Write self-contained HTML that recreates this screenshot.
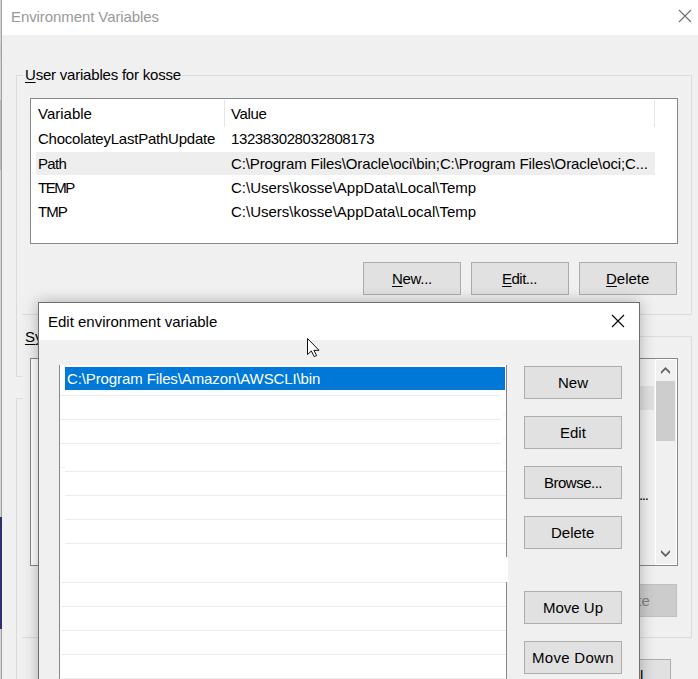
<!DOCTYPE html>
<html><head><meta charset="utf-8">
<style>
*{margin:0;padding:0;box-sizing:border-box}
html,body{width:698px;height:679px;overflow:hidden;background:#f0f0f0}
body{position:relative;font-family:"Liberation Sans",sans-serif;font-size:15px;color:#000}
.a{position:absolute}
.t{position:absolute;white-space:pre;line-height:13px;font-size:15px}
.hl{position:absolute;height:1px}
.vl{position:absolute;width:1px}
.btn{position:absolute;background:#e1e1e1;border:1px solid #adadad}
.u{text-decoration:underline;text-underline-offset:2px}
</style></head><body>
<!-- background window -->
<div class="a" style="left:0;top:0;width:1px;height:679px;background:#d4d4d4"></div>
<div class="a" style="left:0;top:45px;width:1px;height:13px;background:#c5cfdc"></div>
<div class="a" style="left:0;top:100px;width:1px;height:70px;background:#b8b8b8"></div>
<div class="a" style="left:1px;top:0;width:1px;height:679px;background:#a0a0a0"></div>
<div class="a" style="left:2px;top:0;width:696px;height:35px;background:#fff"></div>
<div class="t" style="left:11px;top:10px;color:#999;letter-spacing:-0.085px">Environment Variables</div>
<svg class="a" style="left:678px;top:9px" width="14" height="14" viewBox="0 0 14 14"><path d="M1 1L13 13M13 1L1 13" stroke="#6f6f6f" stroke-width="1.1" fill="none"/></svg>

<div class="a" style="left:0;top:517px;width:2px;height:112px;background:#2b3170"></div>
<!-- upper groupbox -->
<div class="hl" style="left:16px;top:75px;width:676px;background:#dcdcdc"></div>
<div class="vl" style="left:16px;top:75px;height:302px;background:#dcdcdc"></div>
<div class="vl" style="left:691px;top:75px;height:240px;background:#dcdcdc"></div>
<div class="hl" style="left:22px;top:314px;width:670px;background:#dcdcdc"></div>
<div class="a" style="left:23px;top:66px;width:159px;height:20px;background:#f0f0f0"></div>
<div class="t" style="left:25px;top:68px;letter-spacing:-0.21px"><span class="u">U</span>ser variables for kosse</div>

<!-- listview -->
<div class="a" style="left:30px;top:98px;width:648px;height:146px;background:#fff;border:1px solid #828790"></div>
<div class="vl" style="left:224px;top:100px;height:27px;background:#e5e5e5"></div>
<div class="vl" style="left:654px;top:100px;height:27px;background:#e5e5e5"></div>
<div class="t" style="left:38px;top:107px">Variable</div>
<div class="t" style="left:231px;top:107px;letter-spacing:-0.37px">Value</div>
<div class="a" style="left:36px;top:152px;width:619px;height:23px;background:#eeeeee"></div>
<div class="t" style="left:38px;top:132px;letter-spacing:-0.23px">ChocolateyLastPathUpdate</div>
<div class="t" style="left:231px;top:132px;letter-spacing:-0.39px">132383028032808173</div>
<div class="t" style="left:38px;top:157px;letter-spacing:-0.63px">Path</div>
<div class="t" style="left:231px;top:157px;letter-spacing:-0.115px">C:\Program Files\Oracle\oci\bin;C:\Program Files\Oracle\oci;C...</div>
<div class="t" style="left:38px;top:181px;letter-spacing:-1.5px">TEMP</div>
<div class="t" style="left:231px;top:181px">C:\Users\kosse\AppData\Local\Temp</div>
<div class="t" style="left:38px;top:205px;letter-spacing:-1px">TMP</div>
<div class="t" style="left:231px;top:205px">C:\Users\kosse\AppData\Local\Temp</div>

<!-- buttons -->
<div class="btn" style="left:363px;top:262px;width:98px;height:33px"></div>
<div class="t" style="left:392px;top:272px;letter-spacing:-0.28px"><span class="u">N</span>ew...</div>
<div class="btn" style="left:471px;top:262px;width:98px;height:33px"></div>
<div class="t" style="left:502px;top:272px;letter-spacing:-0.5px"><span class="u">E</span>dit...</div>
<div class="btn" style="left:579px;top:262px;width:98px;height:33px"></div>
<div class="t" style="left:606px;top:272px"><span class="u">D</span>elete</div>

<!-- lower groupbox -->
<div class="hl" style="left:639px;top:336px;width:53px;background:#dcdcdc"></div>
<div class="hl" style="left:16px;top:376px;width:6px;background:#dcdcdc"></div>
<div class="hl" style="left:16px;top:398px;width:6px;background:#dcdcdc"></div>
<div class="vl" style="left:16px;top:398px;height:281px;background:#dcdcdc"></div>
<div class="vl" style="left:691px;top:336px;height:302px;background:#dcdcdc"></div>
<div class="hl" style="left:22px;top:637px;width:670px;background:#dcdcdc"></div>
<div class="t" style="left:25px;top:330px"><span class="u">S</span>ystem</div>

<!-- system listview -->
<div class="a" style="left:30px;top:358px;width:648px;height:208px;background:#fff;border:1px solid #828790"></div>
<div class="a" style="left:656px;top:360px;width:20px;height:204px;background:#f0f0f0"></div>

<div class="a" style="left:639px;top:359px;width:16px;height:206px;background:#f1f1f1"></div>
<div class="a" style="left:639px;top:386px;width:15px;height:24px;background:#e0e0e0"></div>
<div class="vl" style="left:655px;top:359px;height:206px;background:#fff"></div>
<svg class="a" style="left:655px;top:358px" width="20" height="20"><path d="M6 13.5L10.5 9L15 13.5L15 16L10.5 11.5L6 16Z" fill="#606060"/></svg>
<div class="a" style="left:656px;top:381px;width:19px;height:60px;background:#cdcdcd"></div>
<svg class="a" style="left:655px;top:540px" width="20" height="20"><path d="M6 10L10.5 14.5L15 10L15 12.5L10.5 17L6 12.5Z" fill="#606060"/></svg>
<div class="t" style="left:639px;top:488px;letter-spacing:-1.3px">...</div>

<div class="btn" style="left:600px;top:584px;width:77px;height:33px;background:#cccccc;border-color:#bfbfbf"></div>
<div class="t" style="left:629px;top:594px;color:#838383">ete</div>
<div class="btn" style="left:600px;top:659px;width:71px;height:33px"></div>
<div class="t" style="left:640px;top:669px">l</div>

<!-- dialog -->
<div class="a" style="left:38px;top:302px;width:602px;height:400px;background:#f0f0f0;border:1px solid #6d6d6d;box-shadow:0 0 14px rgba(0,0,0,0.28)"></div>
<div class="a" style="left:39px;top:303px;width:600px;height:37px;background:#fff"></div>
<div class="t" style="left:48px;top:315px">Edit environment variable</div>
<svg class="a" style="left:611px;top:314px" width="14" height="14" viewBox="0 0 14 14"><path d="M1 1L13 13M13 1L1 13" stroke="#000" stroke-width="1.1" fill="none"/></svg>

<div class="a" style="left:59px;top:365px;width:448px;height:314px;background:#fff"></div>
<div class="vl" style="left:59px;top:365px;height:314px;background:#828790"></div>
<div class="vl" style="left:506px;top:365px;height:192px;background:#828790"></div>
<div class="vl" style="left:506px;top:582px;height:97px;background:#828790"></div>
<div class="hl" style="left:60px;top:395px;width:441px;background:#ececec"></div>
<div class="hl" style="left:60px;top:419px;width:441px;background:#ececec"></div>
<div class="hl" style="left:60px;top:443px;width:441px;background:#ececec"></div>
<div class="hl" style="left:502px;top:414px;width:4px;background:#f0f0f0"></div>
<div class="hl" style="left:502px;top:438px;width:4px;background:#f0f0f0"></div>
<div class="hl" style="left:502px;top:462px;width:4px;background:#f0f0f0"></div>
<div class="hl" style="left:60px;top:467px;width:5px;background:#f0f0f0"></div>
<div class="hl" style="left:65px;top:471px;width:441px;background:#ececec"></div>
<div class="hl" style="left:65px;top:495px;width:441px;background:#ececec"></div>
<div class="hl" style="left:65px;top:519px;width:441px;background:#ececec"></div>
<div class="hl" style="left:65px;top:543px;width:441px;background:#ececec"></div>
<div class="hl" style="left:61px;top:582px;width:445px;background:#ececec"></div>
<div class="hl" style="left:61px;top:606px;width:445px;background:#ececec"></div>
<div class="hl" style="left:61px;top:630px;width:445px;background:#ececec"></div>
<div class="hl" style="left:61px;top:654px;width:445px;background:#ececec"></div>
<div class="hl" style="left:61px;top:678px;width:445px;background:#ececec"></div>
<div class="a" style="left:506px;top:557px;width:2px;height:25px;background:#fff"></div>
<div class="a" style="left:65px;top:367px;width:440px;height:23px;background:#0078d7"></div>
<div class="t" style="left:67px;top:372px;color:#fff;letter-spacing:-0.11px">C:\Program Files\Amazon\AWSCLI\bin</div>

<div class="btn" style="left:524px;top:366px;width:98px;height:33px"></div>
<div class="t" style="left:558px;top:376px">New</div>
<div class="btn" style="left:524px;top:416px;width:98px;height:33px"></div>
<div class="t" style="left:560px;top:426px">Edit</div>
<div class="btn" style="left:524px;top:466px;width:98px;height:33px"></div>
<div class="t" style="left:544px;top:476px;letter-spacing:-0.5px">Browse...</div>
<div class="btn" style="left:524px;top:516px;width:98px;height:33px"></div>
<div class="t" style="left:551px;top:526px">Delete</div>
<div class="btn" style="left:524px;top:591px;width:98px;height:33px"></div>
<div class="t" style="left:543px;top:601px">Move Up</div>
<div class="btn" style="left:524px;top:641px;width:98px;height:33px"></div>
<div class="t" style="left:532px;top:651px;letter-spacing:0.3px">Move Down</div>

<!-- cursor -->
<svg class="a" style="left:306px;top:337px" width="16" height="22" viewBox="0 0 16 22"><path d="M1.5 1.5L1.5 17.5L5.3 14L8.2 19.6L10.6 18.6L7.9 13.3L13 13.3Z" fill="#fff" stroke="#111" stroke-width="1" stroke-linejoin="round"/></svg>
</body></html>
